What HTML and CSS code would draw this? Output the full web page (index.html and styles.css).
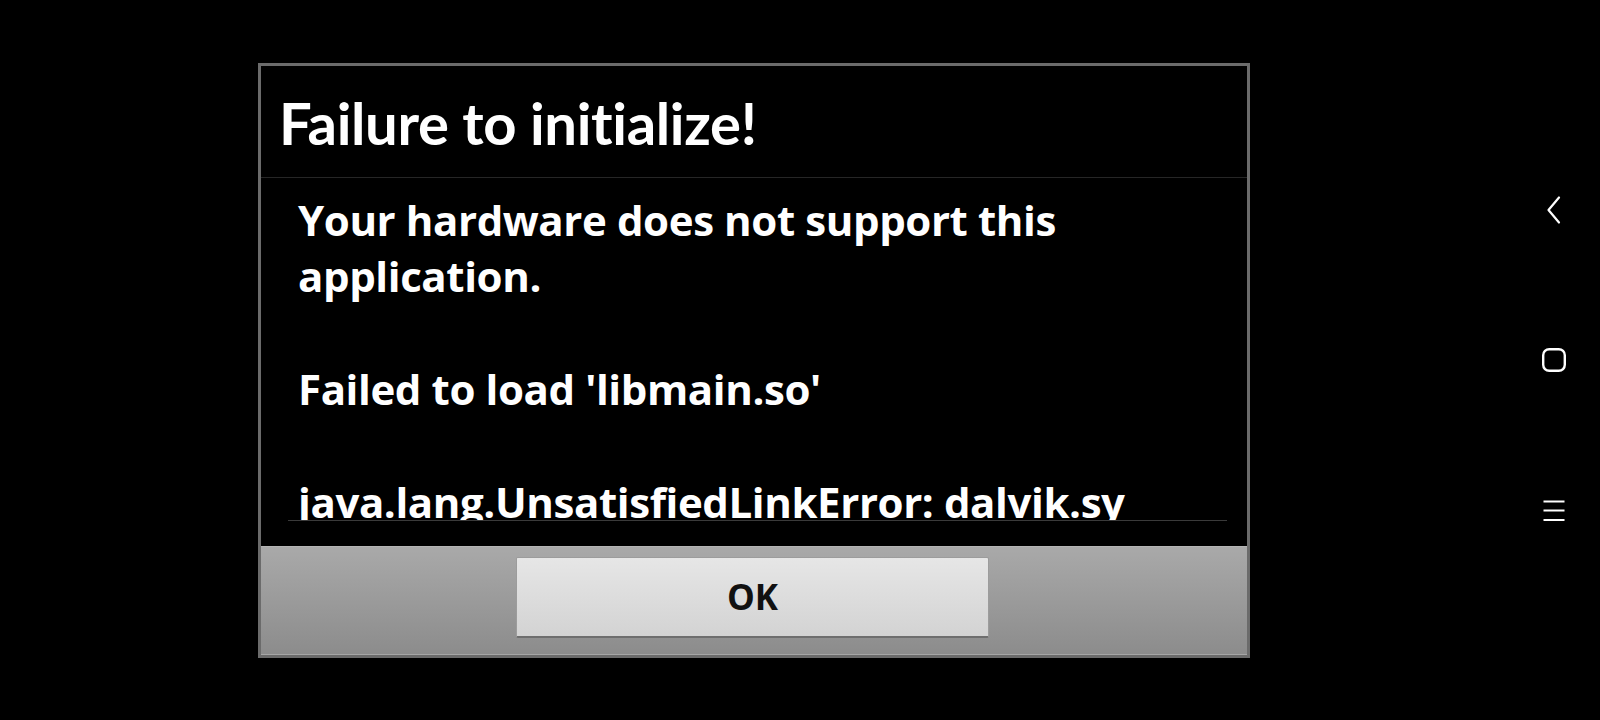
FILE: index.html
```html
<!DOCTYPE html>
<html lang="en">
<head>
<meta charset="utf-8">
<title>Failure to initialize!</title>
<link rel="stylesheet" href="styles.css">
</head>
<body>
<div class="screen">
  <div class="dialog">
    <div class="dialog-title">Failure to initialize!</div>
    <div class="dialog-body">
      <div class="scroll">
        <p class="msg">Your hardware does not support this application.</p>
        <p class="msg">Failed to load 'libmain.so'</p>
        <p class="msg">java.lang.UnsatisfiedLinkError: dalvik.sy</p>
      </div>
    </div>
    <div class="dialog-buttons">
      <button class="btn">OK</button>
    </div>
  </div>
</div>
<nav class="navbar">
  <svg class="nav-icon" viewBox="0 0 30 30" width="30" height="30"><path d="M20 2.5 L9.5 15 L20 27.5" fill="none" stroke="#fff" stroke-width="2.2" stroke-linecap="round" stroke-linejoin="round"/></svg>
  <svg class="nav-icon" viewBox="0 0 30 30" width="30" height="30"><rect x="4.2" y="4.2" width="21.6" height="21.6" rx="6" fill="none" stroke="#fff" stroke-width="2.4"/></svg>
  <svg class="nav-icon" viewBox="0 0 30 30" width="30" height="30"><path d="M4.5 6.5 H25.5 M4.5 15.5 H25.5 M4.5 25 H25.5" fill="none" stroke="#fff" stroke-width="2.2"/></svg>
</nav>
</body>
</html>
```
FILE: styles.css
```css
* { box-sizing: border-box; }
html, body {
  margin: 0;
  padding: 0;
  width: 1600px;
  height: 720px;
  background: #000;
  overflow: hidden;
}
body {
  display: flex;
  font-family: "Open Sans", "Liberation Sans", sans-serif;
}
.screen {
  flex: 1;
  display: flex;
  align-items: center;
  justify-content: center;
}
.dialog {
  width: 992px;
  height: 595px;
  border: 3px solid #6b6b6b;
  background: #000;
  display: flex;
  flex-direction: column;
}
.dialog-title {
  flex: none;
  font-family: "Lato", "Open Sans", sans-serif;
  font-weight: 700;
  font-size: 58px;
  line-height: 72px;
  letter-spacing: -0.35px;
  color: #fff;
  padding: 21px 18px 18px;
  border-bottom: 1px solid #262626;
}
.dialog-body {
  flex: 1;
  min-height: 0;
  padding: 0 20px 25px 27px;
  display: flex;
  flex-direction: column;
}
.scroll {
  flex: 1;
  min-height: 0;
  overflow: hidden;
  padding: 14px 0 0 10px;
  border-bottom: 1px solid #3a3a3a;
}
.msg {
  margin: 0 0 56.5px;
  color: #fff;
  font-weight: 700;
  font-size: 42px;
  line-height: 56.5px;
  letter-spacing: -0.4px;
}
.dialog-buttons {
  flex: none;
  height: 109px;
  background: linear-gradient(#a9a9a9, #8c8c8c);
  border-top: 1px solid #b4b4b4;
  border-bottom: 1px solid #a6a6a6;
  display: flex;
  justify-content: center;
  padding-top: 10px;
}
.btn {
  width: 473px;
  height: 81px;
  margin-right: 3px;
  border: 1px solid #9c9c9c;
  border-bottom: 2px solid #6e6e6e;
  border-radius: 2px;
  background: linear-gradient(#e6e6e6, #d3d3d3);
  font-family: "Open Sans", "Liberation Sans", sans-serif;
  font-weight: 700;
  font-size: 35px;
  color: #111;
  padding: 0;
}
.navbar {
  width: 92px;
  display: flex;
  flex-direction: column;
  align-items: center;
  padding-top: 195px;
  gap: 120px;
}
.nav-icon {
  display: block;
}
```
